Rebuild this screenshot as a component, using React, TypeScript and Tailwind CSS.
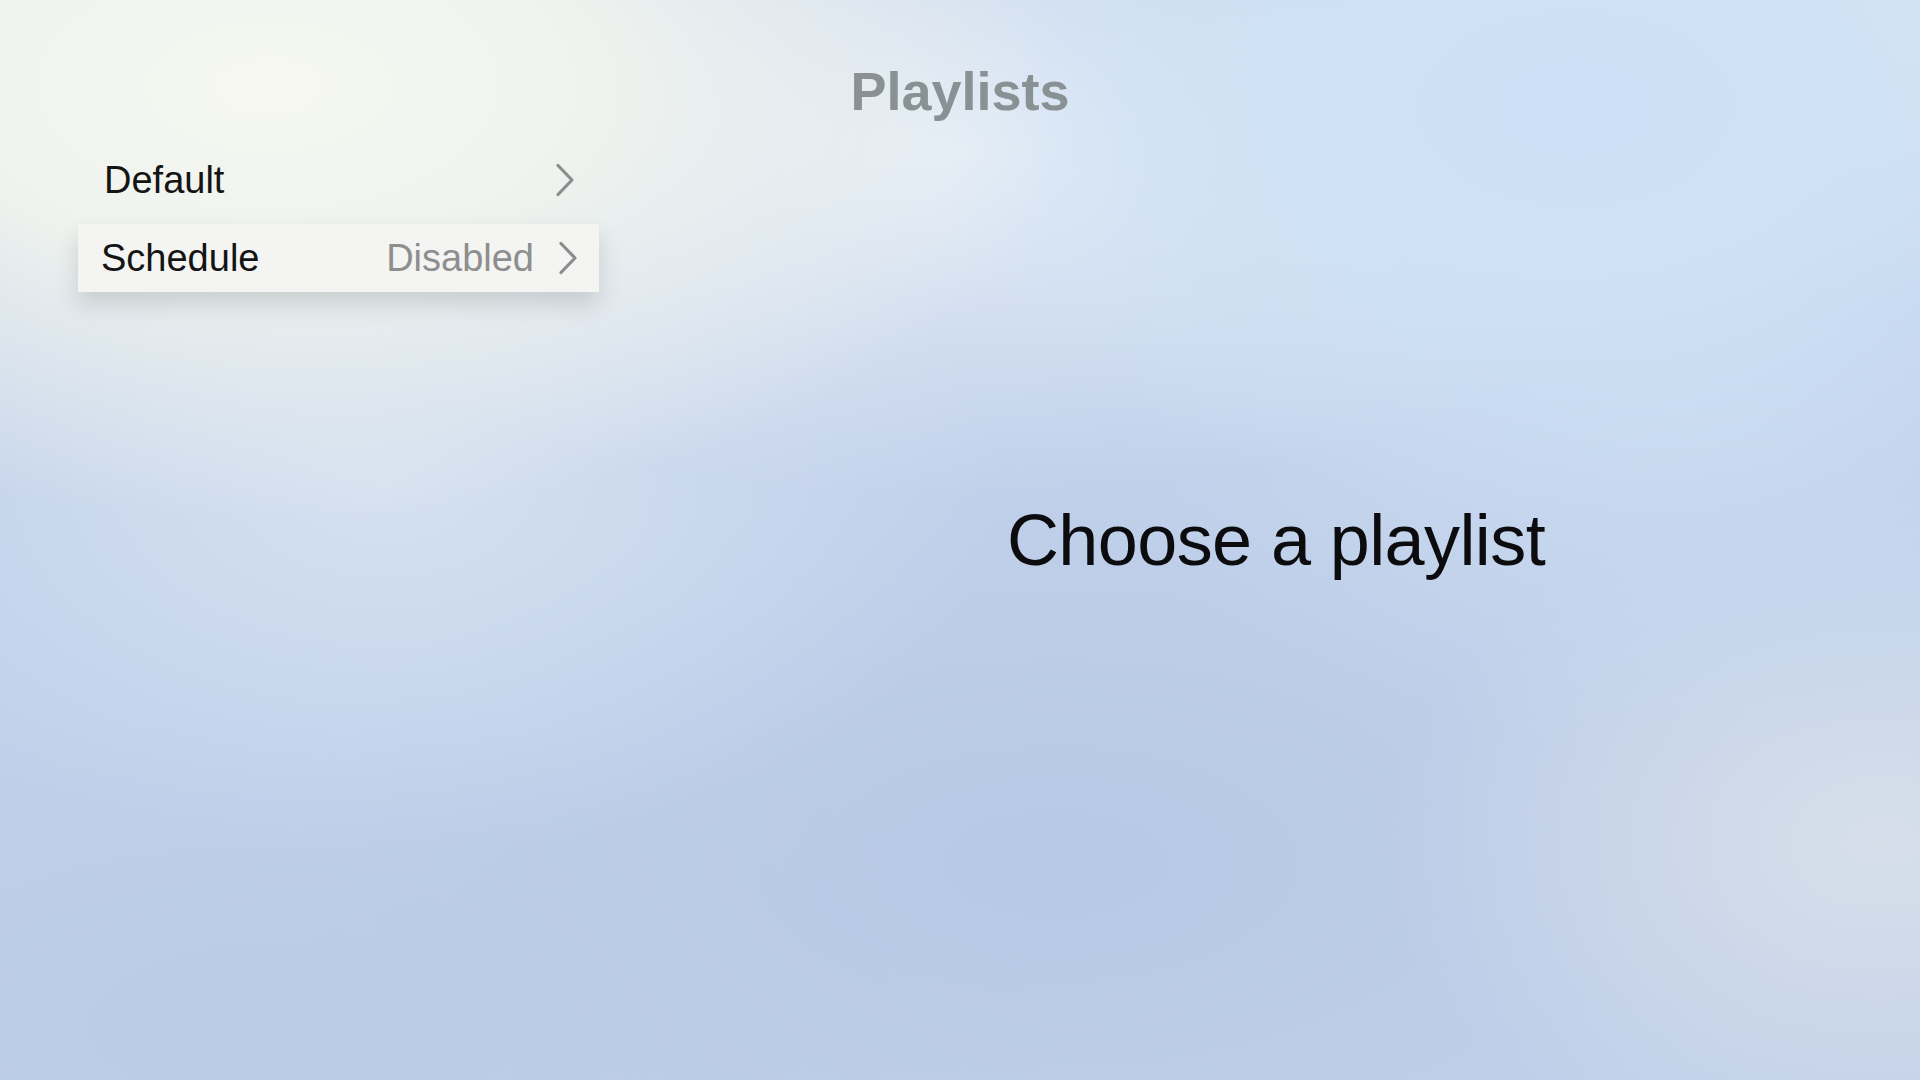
import React from "react";

function Chevron() {
  return (
    <svg width="20" height="34" viewBox="0 0 20 34" fill="none" className="shrink-0">
      <polyline
        points="3,2.5 17,17 3,31.5"
        stroke="#8c8c8c"
        strokeWidth="3.2"
        strokeLinecap="round"
        strokeLinejoin="round"
      />
    </svg>
  );
}

export default function App() {
  return (
    <div
      className="grid h-[1080px] w-[1920px] grid-cols-[632px_1fr] grid-rows-[146px_1fr] overflow-hidden bg-[#c0d0ea] bg-[radial-gradient(ellipse_42%_40%_at_14%_8%,#f6f8f1_0%,#eff3ee_40%,rgba(239,243,238,0)_100%),radial-gradient(ellipse_34%_38%_at_82%_10%,#cce1f6_0%,#cfe2f5_40%,rgba(207,226,245,0)_100%),radial-gradient(ellipse_20%_26%_at_100%_2%,#dde7f2_0%,rgba(221,231,242,0)_100%),radial-gradient(ellipse_40%_32%_at_50%_14%,#e4edf7_0%,rgba(228,237,247,0)_100%),radial-gradient(ellipse_30%_30%_at_88%_40%,#c8d9ef_0%,rgba(200,217,239,0)_100%),radial-gradient(ellipse_32%_34%_at_20%_45%,#d5e1f1_0%,rgba(213,225,241,0)_100%),radial-gradient(ellipse_26%_32%_at_98%_78%,#d6dfea_0%,rgba(214,223,234,0)_100%),radial-gradient(ellipse_40%_35%_at_55%_80%,#b7c8e6_0%,rgba(183,200,230,0)_100%),radial-gradient(ellipse_40%_30%_at_15%_95%,#bacbe7_0%,rgba(186,203,231,0)_100%)]"
      style={{ fontFamily: '"Liberation Sans", Arial, sans-serif' }}
    >
      <div className="col-span-2 col-start-1 row-start-1 flex justify-center pt-[64px]">
        <h1 className="text-[54px] font-bold leading-none text-[#8a9194]">Playlists</h1>
      </div>

      <div className="col-start-1 row-start-2 flex flex-col gap-[10px] pl-[78px]">
        <div className="mx-[6px] flex h-[68px] w-[509px] items-center justify-between pl-[20px] pr-[18px]">
          <span className="text-[38px] leading-none text-[#141414]">Default</span>
          <Chevron />
        </div>
        <div className="flex h-[68px] w-[521px] items-center justify-between bg-[#f4f5f2] pl-[23px] pr-[21px] shadow-[0_12px_22px_rgba(60,60,70,0.18)]">
          <span className="text-[38px] leading-none text-[#141414]">Schedule</span>
          <div className="flex items-center gap-[24px]">
            <span className="text-[38px] leading-none text-[#8e8e8e]">Disabled</span>
            <Chevron />
          </div>
        </div>
      </div>

      <div className="col-start-2 row-span-2 row-start-1 flex items-center justify-center">
        <p className="text-[72px] leading-none tracking-[-0.6px] text-[#0c0c0e]">Choose a playlist</p>
      </div>
    </div>
  );
}
